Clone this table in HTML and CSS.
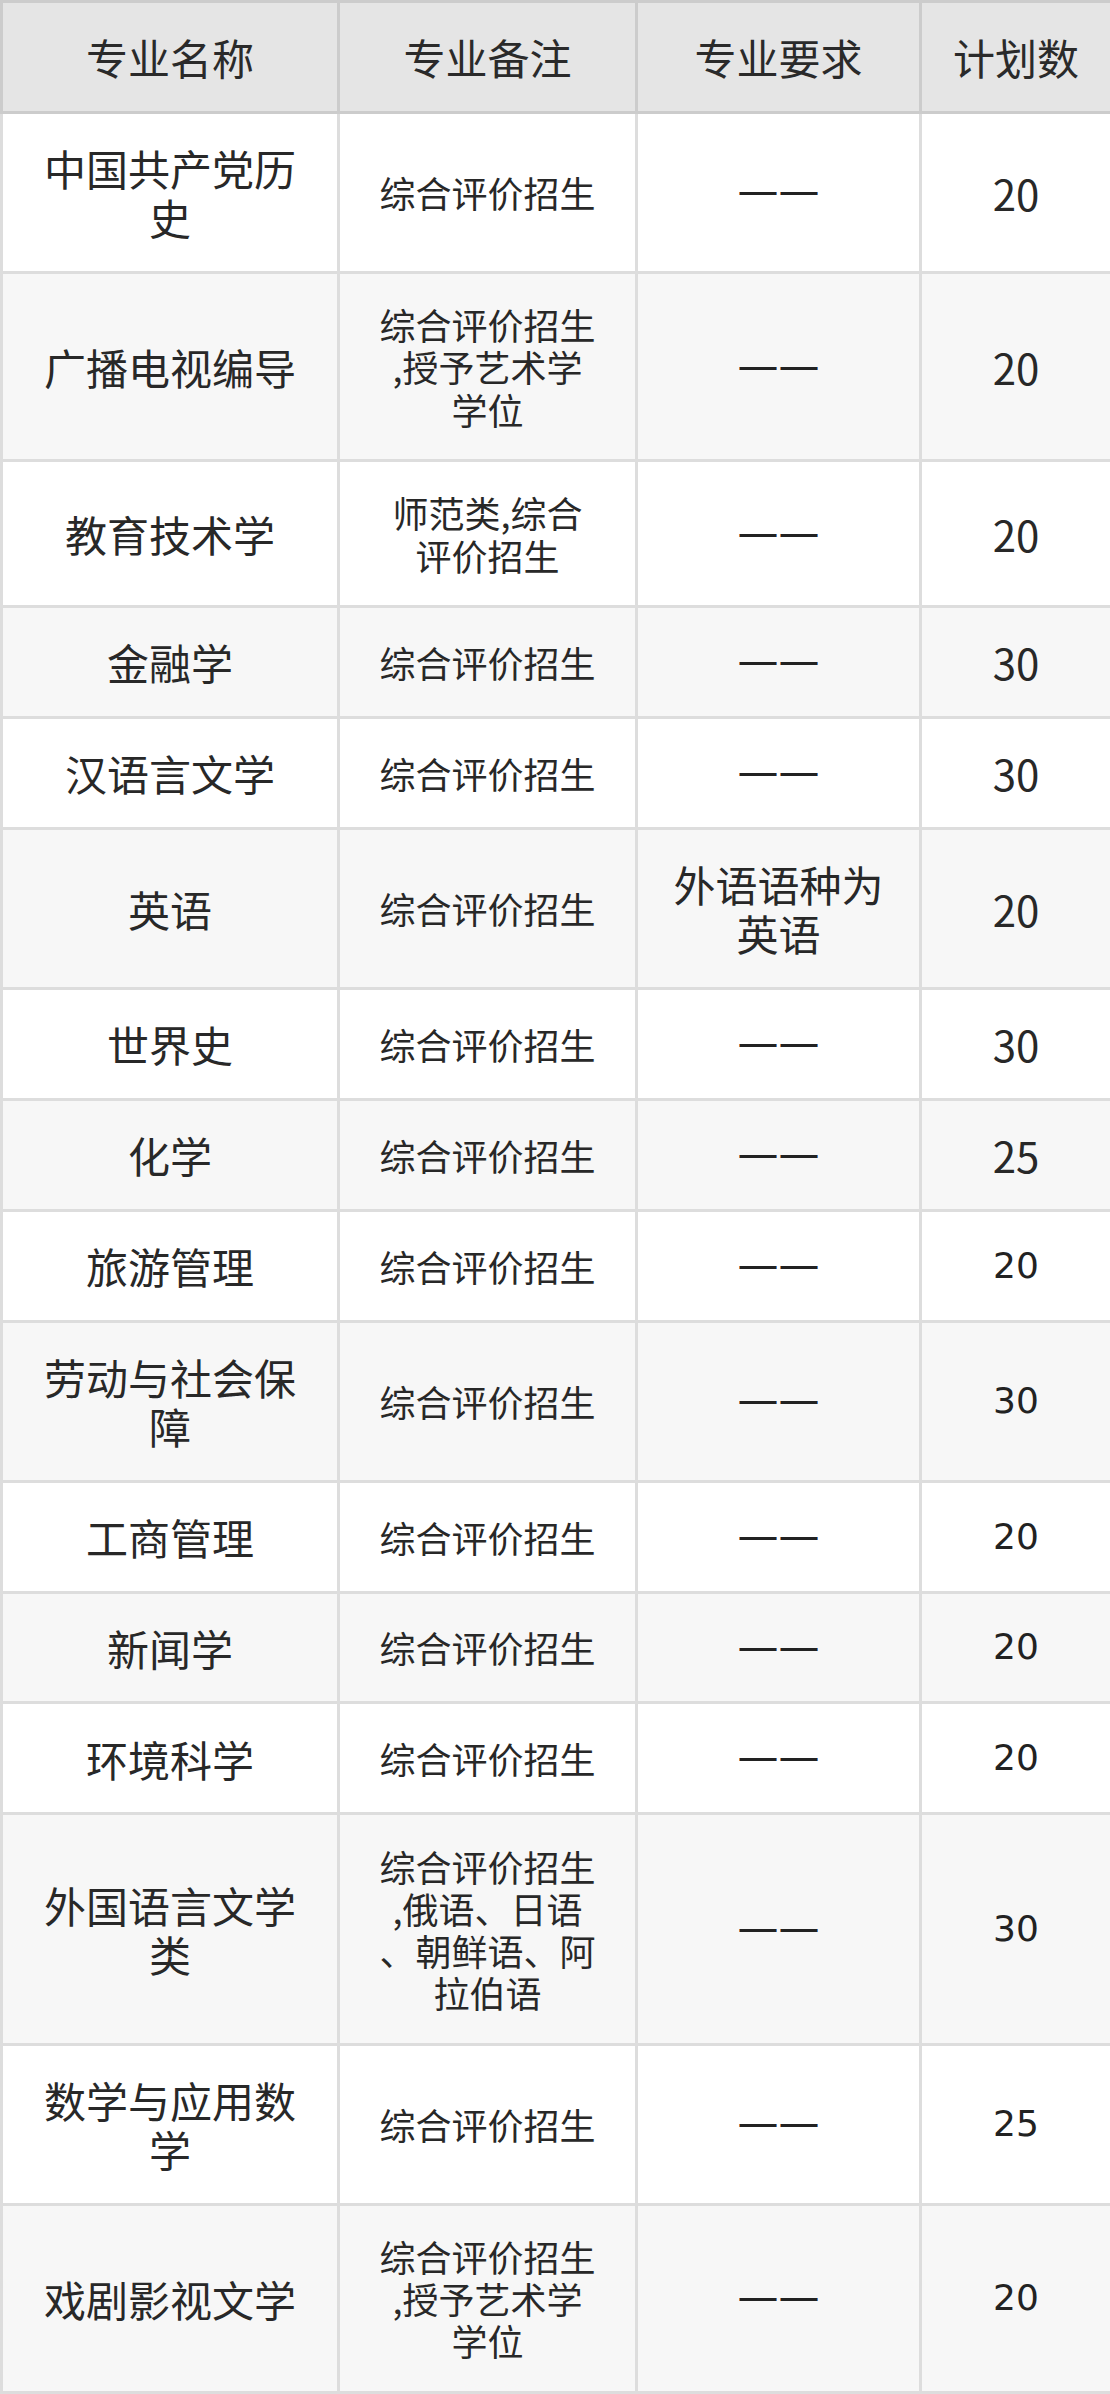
FILE: index.html
```html
<!DOCTYPE html>
<html lang="zh-CN">
<head>
<meta charset="utf-8">
<title>专业计划</title>
<link rel="stylesheet" href="styles.css">
</head>
<body>
<table class="plan">
  <colgroup>
    <col class="c-name">
    <col class="c-note">
    <col class="c-req">
    <col class="c-num">
  </colgroup>
  <thead>
    <tr><th>专业名称</th><th>专业备注</th><th>专业要求</th><th>计划数</th></tr>
  </thead>
  <tbody>
    <tr><td class="name">中国共产党历史</td><td class="note"><span class="wrap">综合评价招生</span></td><td class="req dash">——</td><td class="num">20</td></tr>
    <tr><td class="name">广播电视编导</td><td class="note"><span class="wrap">综合评价招生,授予艺术学学位</span></td><td class="req dash">——</td><td class="num">20</td></tr>
    <tr><td class="name">教育技术学</td><td class="note"><span class="wrap">师范类,综合评价招生</span></td><td class="req dash">——</td><td class="num">20</td></tr>
    <tr><td class="name">金融学</td><td class="note"><span class="wrap">综合评价招生</span></td><td class="req dash">——</td><td class="num">30</td></tr>
    <tr><td class="name">汉语言文学</td><td class="note"><span class="wrap">综合评价招生</span></td><td class="req dash">——</td><td class="num">30</td></tr>
    <tr><td class="name">英语</td><td class="note"><span class="wrap">综合评价招生</span></td><td class="req">外语语种为英语</td><td class="num">20</td></tr>
    <tr><td class="name">世界史</td><td class="note"><span class="wrap">综合评价招生</span></td><td class="req dash">——</td><td class="num">30</td></tr>
    <tr><td class="name">化学</td><td class="note"><span class="wrap">综合评价招生</span></td><td class="req dash">——</td><td class="num">25</td></tr>
    <tr class="alt"><td class="name">旅游管理</td><td class="note"><span class="wrap">综合评价招生</span></td><td class="req dash">——</td><td class="num">20</td></tr>
    <tr class="alt"><td class="name">劳动与社会保障</td><td class="note"><span class="wrap">综合评价招生</span></td><td class="req dash">——</td><td class="num">30</td></tr>
    <tr class="alt"><td class="name">工商管理</td><td class="note"><span class="wrap">综合评价招生</span></td><td class="req dash">——</td><td class="num">20</td></tr>
    <tr class="alt"><td class="name">新闻学</td><td class="note"><span class="wrap">综合评价招生</span></td><td class="req dash">——</td><td class="num">20</td></tr>
    <tr class="alt"><td class="name">环境科学</td><td class="note"><span class="wrap">综合评价招生</span></td><td class="req dash">——</td><td class="num">20</td></tr>
    <tr class="alt"><td class="name">外国语言文学类</td><td class="note"><span class="wrap">综合评价招生,俄语、日语、朝鲜语、阿拉伯语</span></td><td class="req dash">——</td><td class="num">30</td></tr>
    <tr class="alt"><td class="name">数学与应用数学</td><td class="note"><span class="wrap">综合评价招生</span></td><td class="req dash">——</td><td class="num">25</td></tr>
    <tr class="alt"><td class="name">戏剧影视文学</td><td class="note"><span class="wrap">综合评价招生,授予艺术学学位</span></td><td class="req dash">——</td><td class="num">20</td></tr>
  </tbody>
</table>
</body>
</html>
```

FILE: styles.css
```css
html, body {
  margin: 0;
  padding: 0;
  background: #ffffff;
}

.plan {
  width: 1110px;
  table-layout: fixed;
  border-collapse: collapse;
  font-family: "Noto Sans CJK SC", "Noto Sans", sans-serif;
  color: #282828;
  font-size: 42px;
  line-height: 1.17;
}

.c-name { width: 337px; }
.c-note { width: 298px; }
.c-req { width: 284px; }
.c-num { width: 191px; }

.plan th,
.plan td {
  border: 3px solid #dddddd;
  padding: 29.4px 22px;
  text-align: center;
  vertical-align: middle;
  font-weight: normal;
}

.plan th {
  background: #e5e5e5;
  border-color: #cccccc;
  color: #2a2a2a;
}

.plan tbody tr:nth-child(even) td {
  background: #f7f7f7;
}

.plan td.note {
  font-size: 36px;
}

.wrap {
  display: inline-block;
  width: 220px;
  line-break: anywhere;
}

.plan td.dash {
  font-family: "DejaVu Sans", "Noto Sans CJK SC", sans-serif;
  font-size: 41px;
  color: #222222;
}

.plan tr.alt td.num {
  font-family: "DejaVu Sans", "Noto Sans CJK SC", sans-serif;
  font-size: 36px;
  color: #222222;
}
```
